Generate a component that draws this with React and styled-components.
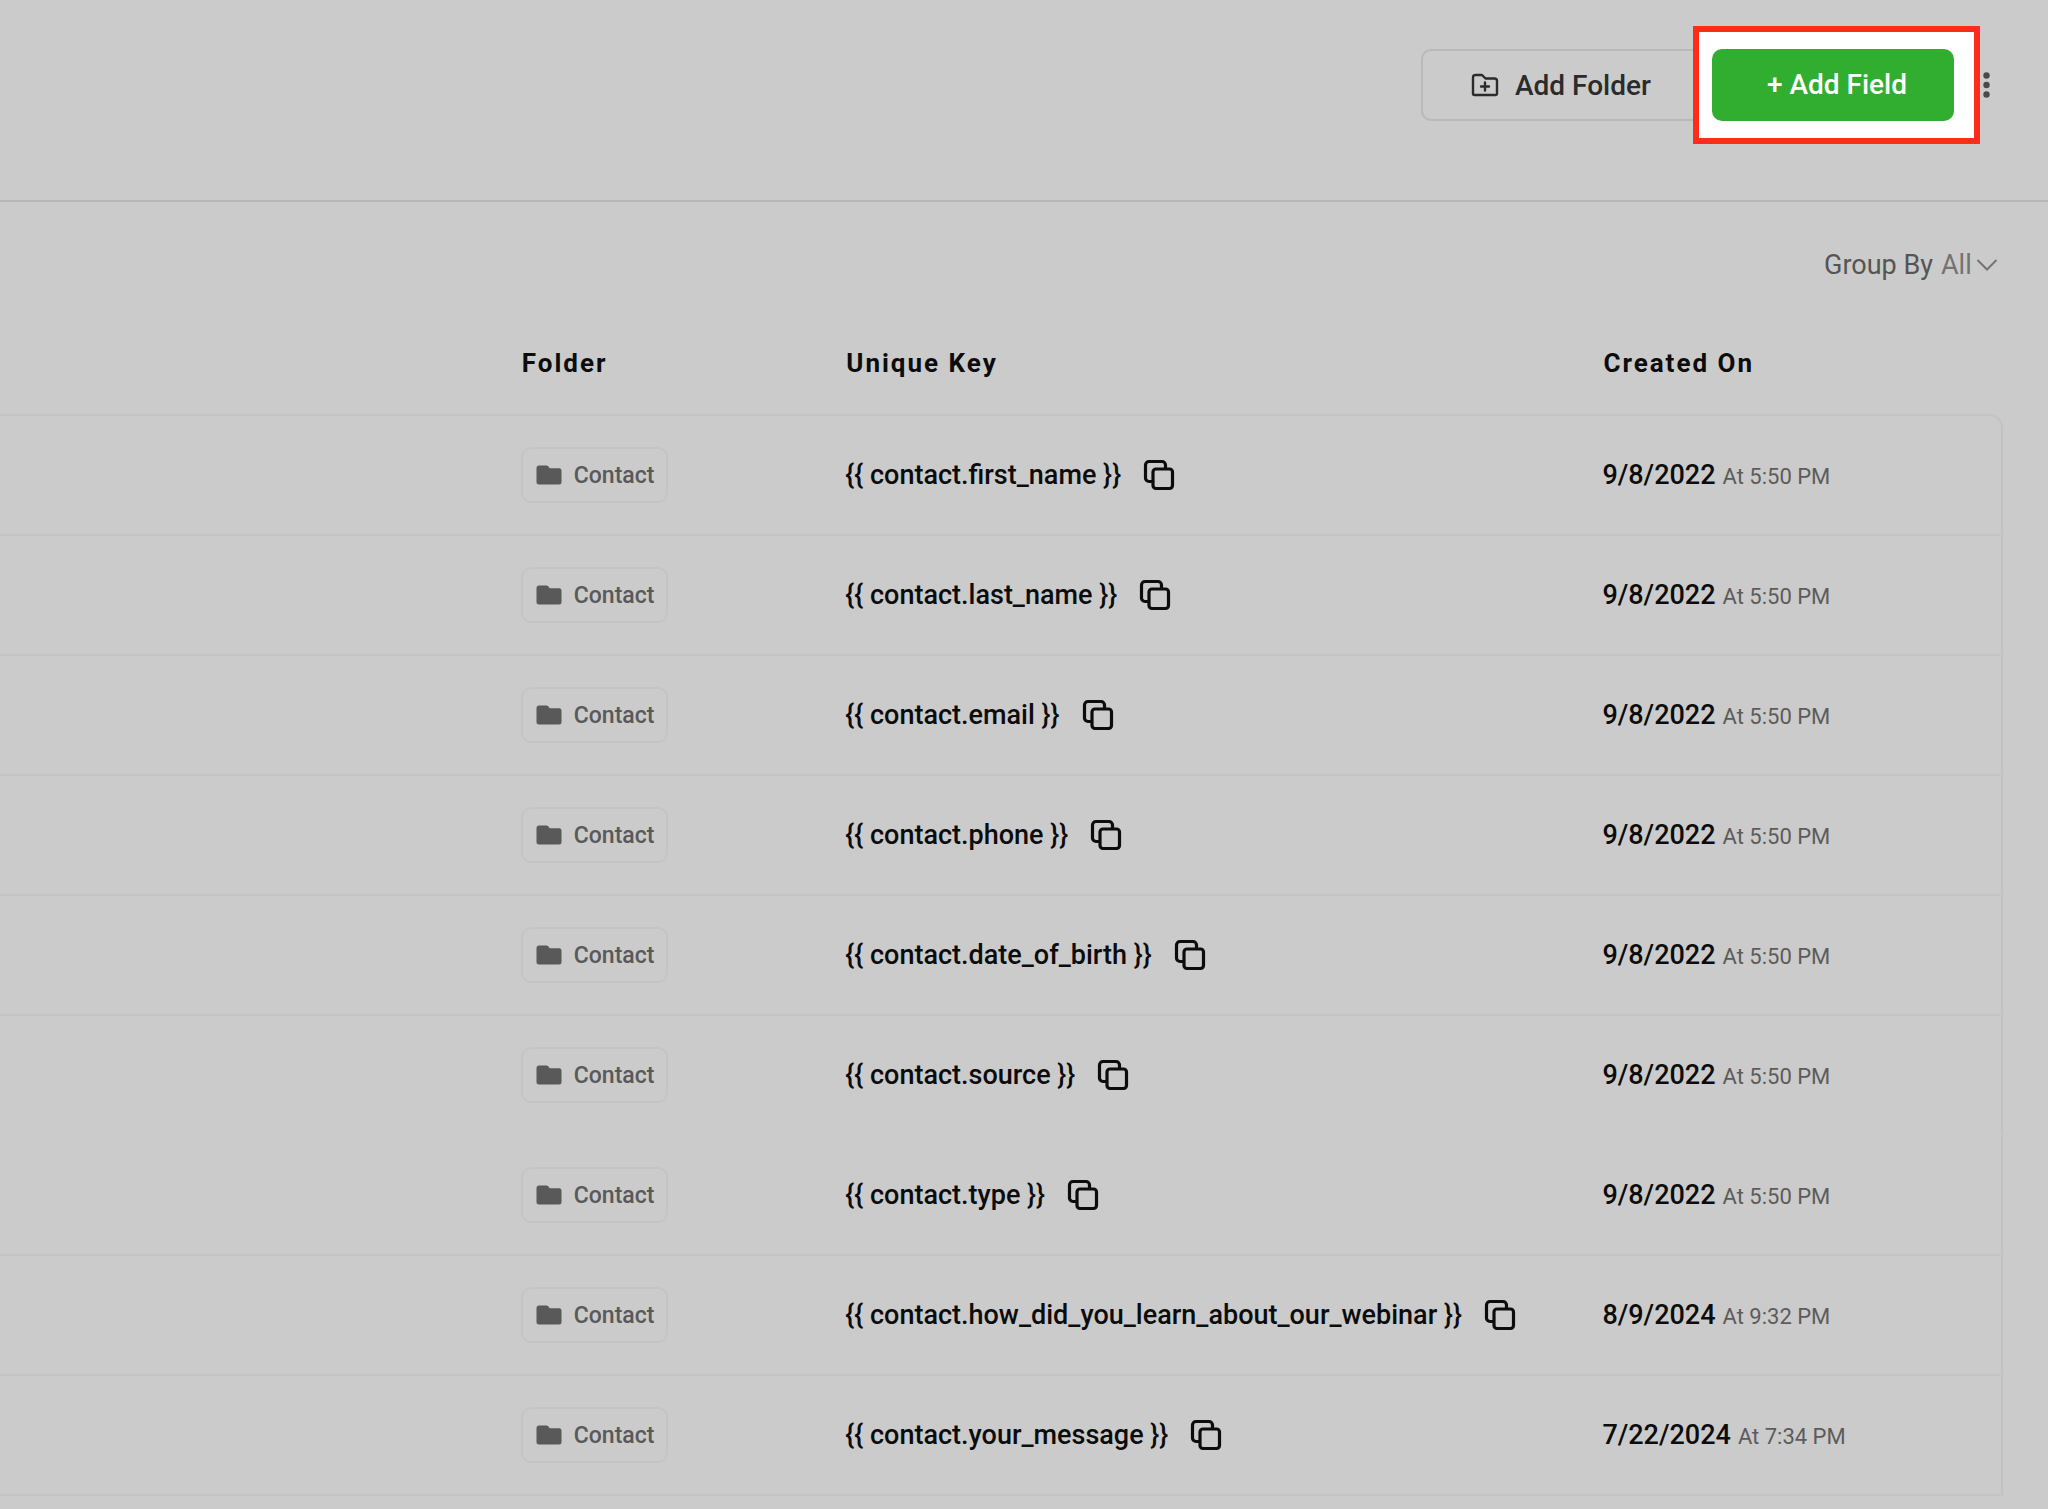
import styled, { createGlobalStyle } from "styled-components";

const GlobalStyle = createGlobalStyle`
  * {
    box-sizing: border-box;
  }

  body {
    margin: 0;
    background: #cbcbcb;
    color: #0c0c0c;
    font-family: Roboto, "Liberation Sans", sans-serif;
  }
`;

const Page = styled.main`
  min-height: 100vh;
  overflow: hidden;
`;

const Toolbar = styled.header`
  display: flex;
  justify-content: flex-end;
  align-items: center;
  height: 202px;
  padding: 0 54px 30px 0;
  border-bottom: 2px solid #b8b8b8;
`;

const Button = styled.button`
  display: flex;
  align-items: center;
  justify-content: center;
  height: 72px;
  padding: 0 0 2px;
  border-radius: 10px;
  font-family: inherit;
  font-size: 28px;
  font-weight: 500;
  cursor: pointer;
`;

const SecondaryButton = styled(Button)`
  gap: 14px;
  width: 284px;
  margin-right: -12px;
  padding: 0 46px;
  border: 2px solid #b9b9b9;
  background: transparent;
  color: #2b2b2b;
  justify-content: flex-start;

  svg {
    width: 32px;
    height: 32px;
  }
`;

const PrimaryButton = styled(Button)`
  width: 242px;
  padding-left: 8px;
  border: none;
  background: #31ae2f;
  color: #fff;
`;

const Highlight = styled.div`
  position: relative;
  padding: 17px 20px 17px 13px;
  border: 6px solid #ff2c1a;
  background: #fff;
`;

const MenuButton = styled.button`
  display: flex;
  width: 14px;
  padding: 0;
  border: none;
  background: none;
  color: #4a4a4a;
  cursor: pointer;

  svg {
    width: 14px;
    height: 32px;
    fill: currentColor;
  }
`;

const GroupBar = styled.div`
  display: flex;
  justify-content: flex-end;
  align-items: center;
  height: 126px;
  padding-right: 50px;
  color: #555;
  font-size: 27px;

  label {
    margin-right: 8px;
  }

  svg {
    width: 22px;
    height: 14px;
    margin-left: 4px;
    color: #737373;
    pointer-events: none;
  }
`;

const GroupSelect = styled.select`
  appearance: none;
  padding: 0;
  border: none;
  background: none;
  color: #737373;
  font: inherit;
  cursor: pointer;
`;

const TableWrap = styled.div`
  padding-right: 45px;
`;

const Table = styled.table`
  width: 100%;
  border-spacing: 0;
  table-layout: fixed;
  text-align: left;
`;

const HeadCell = styled.th`
  width: ${(props) => props.$width || "auto"};
  height: 86px;
  padding: 0 0 16px 1px;
  font-size: 26px;
  font-weight: 700;
  letter-spacing: 2px;
`;

const Cell = styled.td`
  height: 120px;
  padding: 0;
  border-bottom: 2px solid ${(props) => (props.$open ? "transparent" : "#c4c4c4")};

  tr:first-child > & {
    height: 122px;
    border-top: 2px solid #c4c4c4;
  }

  tr:first-child > &:last-child {
    border-top-right-radius: 14px;
  }

  &:last-child {
    border-right: 2px solid #c2c2c2;
  }
`;

const FolderTag = styled.span`
  display: inline-flex;
  align-items: center;
  gap: 10px;
  height: 56px;
  padding: 0 12px 0 11px;
  border: 2px solid #c4c4c4;
  border-radius: 10px;
  color: #595959;
  font-size: 23px;
  font-weight: 500;

  svg {
    width: 30px;
    height: 30px;
    fill: currentColor;
  }
`;

const KeyGroup = styled.div`
  display: flex;
  align-items: center;
  gap: 20px;
  font-size: 27px;
  font-weight: 500;
  white-space: nowrap;
`;

const CopyButton = styled.button`
  display: flex;
  padding: 0;
  border: none;
  background: none;
  color: inherit;
  cursor: pointer;

  svg {
    width: 36px;
    height: 36px;
  }
`;

const CreatedDate = styled.span`
  font-size: 27px;
  font-weight: 500;
`;

const CreatedTime = styled.span`
  margin-left: 7px;
  color: #5c5c5c;
  font-size: 22px;
`;

const FolderPlusIcon = () => (
  <svg viewBox="0 0 32 32" fill="none" stroke="currentColor" strokeWidth="2.4" strokeLinecap="round" strokeLinejoin="round">
    <path d="M4 24.500V8.500a2.500 2.500 0 0 1 2.500-2.500h6.500l3.500 3.500h9a2.500 2.500 0 0 1 2.500 2.500v12.500a1.500 1.500 0 0 1-1.500 1.500h-21a1.500 1.500 0 0 1-1.500-1.500z" />
    <path d="M16 13.500v8M12 17.500h8" />
  </svg>
);

const FolderIcon = () => (
  <svg viewBox="0 0 30 30">
    <path d="M5 5.500h7.500a2 2 0 0 1 1.500.600l1.800 2.200h9.200a2.500 2.500 0 0 1 2.500 2.500v11.200a2.500 2.500 0 0 1-2.500 2.500H5a2.500 2.500 0 0 1-2.500-2.500V8a2.500 2.500 0 0 1 2.500-2.500z" />
  </svg>
);

const CopyIcon = () => (
  <svg viewBox="0 0 36 36" fill="none" stroke="currentColor" strokeWidth="3.2" strokeLinejoin="round">
    <rect x="12" y="12" width="19.500" height="19.500" rx="3" />
    <path d="M12 24.500H8a3.500 3.500 0 0 1-3.500-3.500V8A3.500 3.500 0 0 1 8 4.500h13A3.500 3.500 0 0 1 24.500 8v4" />
  </svg>
);

const fields = [
  { key: "first_name", date: "9/8/2022", time: "5:50 PM" },
  { key: "last_name", date: "9/8/2022", time: "5:50 PM" },
  { key: "email", date: "9/8/2022", time: "5:50 PM" },
  { key: "phone", date: "9/8/2022", time: "5:50 PM" },
  { key: "date_of_birth", date: "9/8/2022", time: "5:50 PM" },
  { key: "source", date: "9/8/2022", time: "5:50 PM", open: true },
  { key: "type", date: "9/8/2022", time: "5:50 PM" },
  { key: "how_did_you_learn_about_our_webinar", date: "8/9/2024", time: "9:32 PM" },
  { key: "your_message", date: "7/22/2024", time: "7:34 PM" },
];

const FieldRow = ({ field }) => (
  <tr>
    <Cell $open={field.open} />
    <Cell $open={field.open}>
      <FolderTag>
        <FolderIcon />
        Contact
      </FolderTag>
    </Cell>
    <Cell $open={field.open}>
      <KeyGroup>
        <span>{`{{ contact.${field.key} }}`}</span>
        <CopyButton aria-label="Copy key">
          <CopyIcon />
        </CopyButton>
      </KeyGroup>
    </Cell>
    <Cell $open={field.open}>
      <CreatedDate>{field.date}</CreatedDate>
      <CreatedTime>At {field.time}</CreatedTime>
    </Cell>
  </tr>
);

const App = () => (
  <Page>
    <GlobalStyle />
    <Toolbar>
      <SecondaryButton>
        <FolderPlusIcon />
        Add Folder
      </SecondaryButton>
      <Highlight>
        <PrimaryButton>+ Add Field</PrimaryButton>
      </Highlight>
      <MenuButton aria-label="More options">
        <svg viewBox="0 0 14 32">
          <circle cx="6.500" cy="6.500" r="3.200" />
          <circle cx="6.500" cy="16" r="3.200" />
          <circle cx="6.500" cy="25.500" r="3.200" />
        </svg>
      </MenuButton>
    </Toolbar>
    <GroupBar>
      <label htmlFor="group-by">Group By</label>
      <GroupSelect id="group-by">
        <option>All</option>
      </GroupSelect>
      <svg viewBox="0 0 22 14" fill="none" stroke="currentColor" strokeWidth="2">
        <path d="M1.500 2 11 11.500 20.500 2" />
      </svg>
    </GroupBar>
    <TableWrap>
      <Table>
        <thead>
          <tr>
            <HeadCell as="td" $width="26%" />
            <HeadCell $width="16.200%">Folder</HeadCell>
            <HeadCell $width="37.800%">Unique Key</HeadCell>
            <HeadCell>Created On</HeadCell>
          </tr>
        </thead>
        <tbody>
          {fields.map((field) => (
            <FieldRow key={field.key} field={field} />
          ))}
        </tbody>
      </Table>
    </TableWrap>
  </Page>
);

export default App;
